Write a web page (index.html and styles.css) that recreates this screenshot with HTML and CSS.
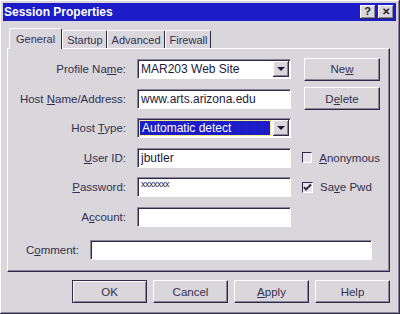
FILE: index.html
```html
<!DOCTYPE html>
<html>
<head>
<meta charset="utf-8">
<link rel="stylesheet" href="styles.css">
</head>
<body>
<div class="window">
  <div class="titlebar">
    <span class="title">Session Properties</span>
    <span class="tbtns">
      <span class="tbtn">?</span>
      <span class="tbtn x">✕</span>
    </span>
  </div>
  <div class="tabs">
    <span class="tab active">General</span>
    <span class="tab">Startup</span>
    <span class="tab">Advanced</span>
    <span class="tab">Firewall</span>
  </div>
  <div class="panel">
    <div class="form">
      <label class="lbl">Profile Na<u>m</u>e:</label>
      <div class="field combo"><span class="val">MAR203 Web Site</span><span class="drop"><span class="tri"></span></span></div>
      <div class="btn side">Ne<u>w</u></div>

      <label class="lbl">Host <u>N</u>ame/Address:</label>
      <div class="field"><span class="val">www.arts.arizona.edu</span></div>
      <div class="btn side">D<u>e</u>lete</div>

      <label class="lbl">Host <u>T</u>ype:</label>
      <div class="field combo"><span class="val sel">Automatic detect</span><span class="drop"><span class="tri"></span></span></div>
      <div></div>

      <label class="lbl"><u>U</u>ser ID:</label>
      <div class="field"><span class="val">jbutler</span></div>
      <div class="check"><span class="box"></span><span><u>A</u>nonymous</span></div>

      <label class="lbl"><u>P</u>assword:</label>
      <div class="field"><span class="val pw">xxxxxxx</span></div>
      <div class="check"><span class="box"><svg width="9" height="9" viewBox="0 0 9 9"><path d="M1 4 L3 6.5 L8 1.5" fill="none" stroke="#2e2a48" stroke-width="2"/></svg></span><span>Sa<u>v</u>e Pwd</span></div>

      <label class="lbl">A<u>c</u>count:</label>
      <div class="field"></div>
      <div></div>
    </div>
    <div class="comment">
      <label class="lbl clbl">C<u>o</u>mment:</label>
      <div class="field cfield"></div>
    </div>
  </div>
  <div class="buttons">
    <div class="btn bottom def">OK</div>
    <div class="btn bottom">Cancel</div>
    <div class="btn bottom"><u>A</u>pply</div>
    <div class="btn bottom">Help</div>
  </div>
</div>
</body>
</html>
```

FILE: styles.css
```css
html, body {
  margin: 0;
  padding: 0;
  background: #d9d6dc;
}
body {
  font-family: "Liberation Sans", Arial, sans-serif;
  font-size: 11px;
  color: #34304e;
}
u { text-decoration: underline; text-underline-offset: 1px; }

.window {
  width: 400px;
  height: 314px;
  box-sizing: border-box;
  padding: 3px;
  background: #d9d6dc;
  border-right: 1px solid #2e2a48;
  border-bottom: 1px solid #2e2a48;
  box-shadow: inset 1px 1px 0 #ffffff, inset -1px -1px 0 #8a8698;
  display: flex;
  flex-direction: column;
}

.titlebar {
  height: 18px;
  background: #1c1cc8;
  display: flex;
  align-items: center;
  justify-content: space-between;
  padding: 0 2px 0 1px;
}
.title {
  color: #fff;
  font-weight: bold;
  font-size: 12px;
}
.tbtns { display: flex; gap: 2px; }
.tbtn {
  width: 16px;
  height: 14px;
  box-sizing: border-box;
  background: #d9d6dc;
  border-right: 1px solid #2e2a48;
  border-bottom: 1px solid #2e2a48;
  box-shadow: inset 1px 1px 0 #fff, inset -1px -1px 0 #8a8698;
  display: flex;
  align-items: center;
  justify-content: center;
  font-weight: bold;
  font-size: 11px;
  color: #222;
  line-height: 1;
}
.tbtn.x { font-size: 10px; }

.tabs {
  display: flex;
  align-items: flex-end;
  margin-top: 5px;
  padding-left: 6px;
  height: 22px;
}
.tab {
  height: 18px;
  padding: 0 3px 0 4px;
  box-sizing: border-box;
  display: flex;
  align-items: center;
  border-left: 1px solid #fff;
  border-top: 1px solid #fff;
  border-right: 1px solid #2e2a48;
  border-radius: 2px 2px 0 0;
  font-size: 11px;
}
.tab.active {
  height: 21px;
  padding: 0 6px 1px 6px;
  position: relative;
  z-index: 1;
  margin-bottom: -1px;
  background: #d9d6dc;
}

.panel {
  margin: 0 6px 0 4px;
  height: 224px;
  box-sizing: border-box;
  border-left: 1px solid #fff;
  border-top: 1px solid #fff;
  border-right: 1px solid #2e2a48;
  border-bottom: 1px solid #2e2a48;
  box-shadow: inset -1px -1px 0 #8a8698;
  padding-top: 10px;
}

.form {
  display: grid;
  grid-template-columns: 118px 154px 78px;
  column-gap: 11px;
  grid-auto-rows: 20px;
  row-gap: 9.5px;
  align-items: center;
}

.lbl {
  text-align: right;
  font-size: 11.5px;
  white-space: nowrap;
}

.field {
  height: 20px;
  box-sizing: border-box;
  background: #fff;
  border-top: 1px solid #8a8698;
  border-left: 1px solid #8a8698;
  border-right: 1px solid #fff;
  border-bottom: 1px solid #fff;
  box-shadow: inset 1px 1px 0 #2e2a48;
  display: flex;
  align-items: center;
  padding-left: 3px;
  font-size: 12px;
  color: #1c1a3a;
}
.val { white-space: nowrap; }
.val.sel {
  background: #1c1cc8;
  color: #fff;
  outline: 1px dotted #e8e070;
  padding: 0 3px 0 2px;
  margin-left: -1px;
  flex: 1;
  height: 14px;
  line-height: 14px;
}
.val.pw { font-size: 9px; letter-spacing: -0.5px; position: relative; top: -3px; }

.combo { justify-content: space-between; padding-right: 1px; }
.drop {
  width: 16px;
  height: 16px;
  box-sizing: border-box;
  background: #d9d6dc;
  border-right: 1px solid #2e2a48;
  border-bottom: 1px solid #2e2a48;
  box-shadow: inset 1px 1px 0 #fff, inset -1px -1px 0 #8a8698;
  display: flex;
  align-items: center;
  justify-content: center;
  margin-left: 3px;
  flex: none;
}
.tri {
  width: 0;
  height: 0;
  border-left: 4px solid transparent;
  border-right: 4px solid transparent;
  border-top: 4px solid #1c1a3a;
}

.btn {
  box-sizing: border-box;
  background: #d9d6dc;
  border-right: 1px solid #2e2a48;
  border-bottom: 1px solid #2e2a48;
  border-left: 1px solid #fff;
  border-top: 1px solid #fff;
  box-shadow: inset -1px -1px 0 #8a8698;
  display: flex;
  align-items: center;
  justify-content: center;
  font-size: 11.5px;
}
.btn.side {
  width: 76px;
  height: 23px;
  margin-left: 2px;
}

.check {
  display: flex;
  align-items: center;
  gap: 7px;
  font-size: 11.5px;
}
.box {
  width: 11px;
  height: 11px;
  box-sizing: border-box;
  background: #e8e6ec;
  border-top: 1px solid #2e2a48;
  border-left: 1px solid #2e2a48;
  border-right: 1px solid #fff;
  border-bottom: 1px solid #fff;
  display: flex;
  align-items: center;
  justify-content: center;
}

.comment {
  display: flex;
  align-items: center;
  margin-top: 13px;
  gap: 11px;
}
.clbl { width: 71px; }
.cfield { width: 282px; }

.buttons {
  display: flex;
  justify-content: flex-end;
  gap: 6px;
  margin-top: 8px;
  padding-right: 6px;
}
.btn.bottom {
  width: 75px;
  height: 23px;
}
.btn.def {
  border: 1px solid #2e2a48;
  box-shadow: inset 1px 1px 0 #fff, inset -1px -1px 0 #8a8698;
}
```
